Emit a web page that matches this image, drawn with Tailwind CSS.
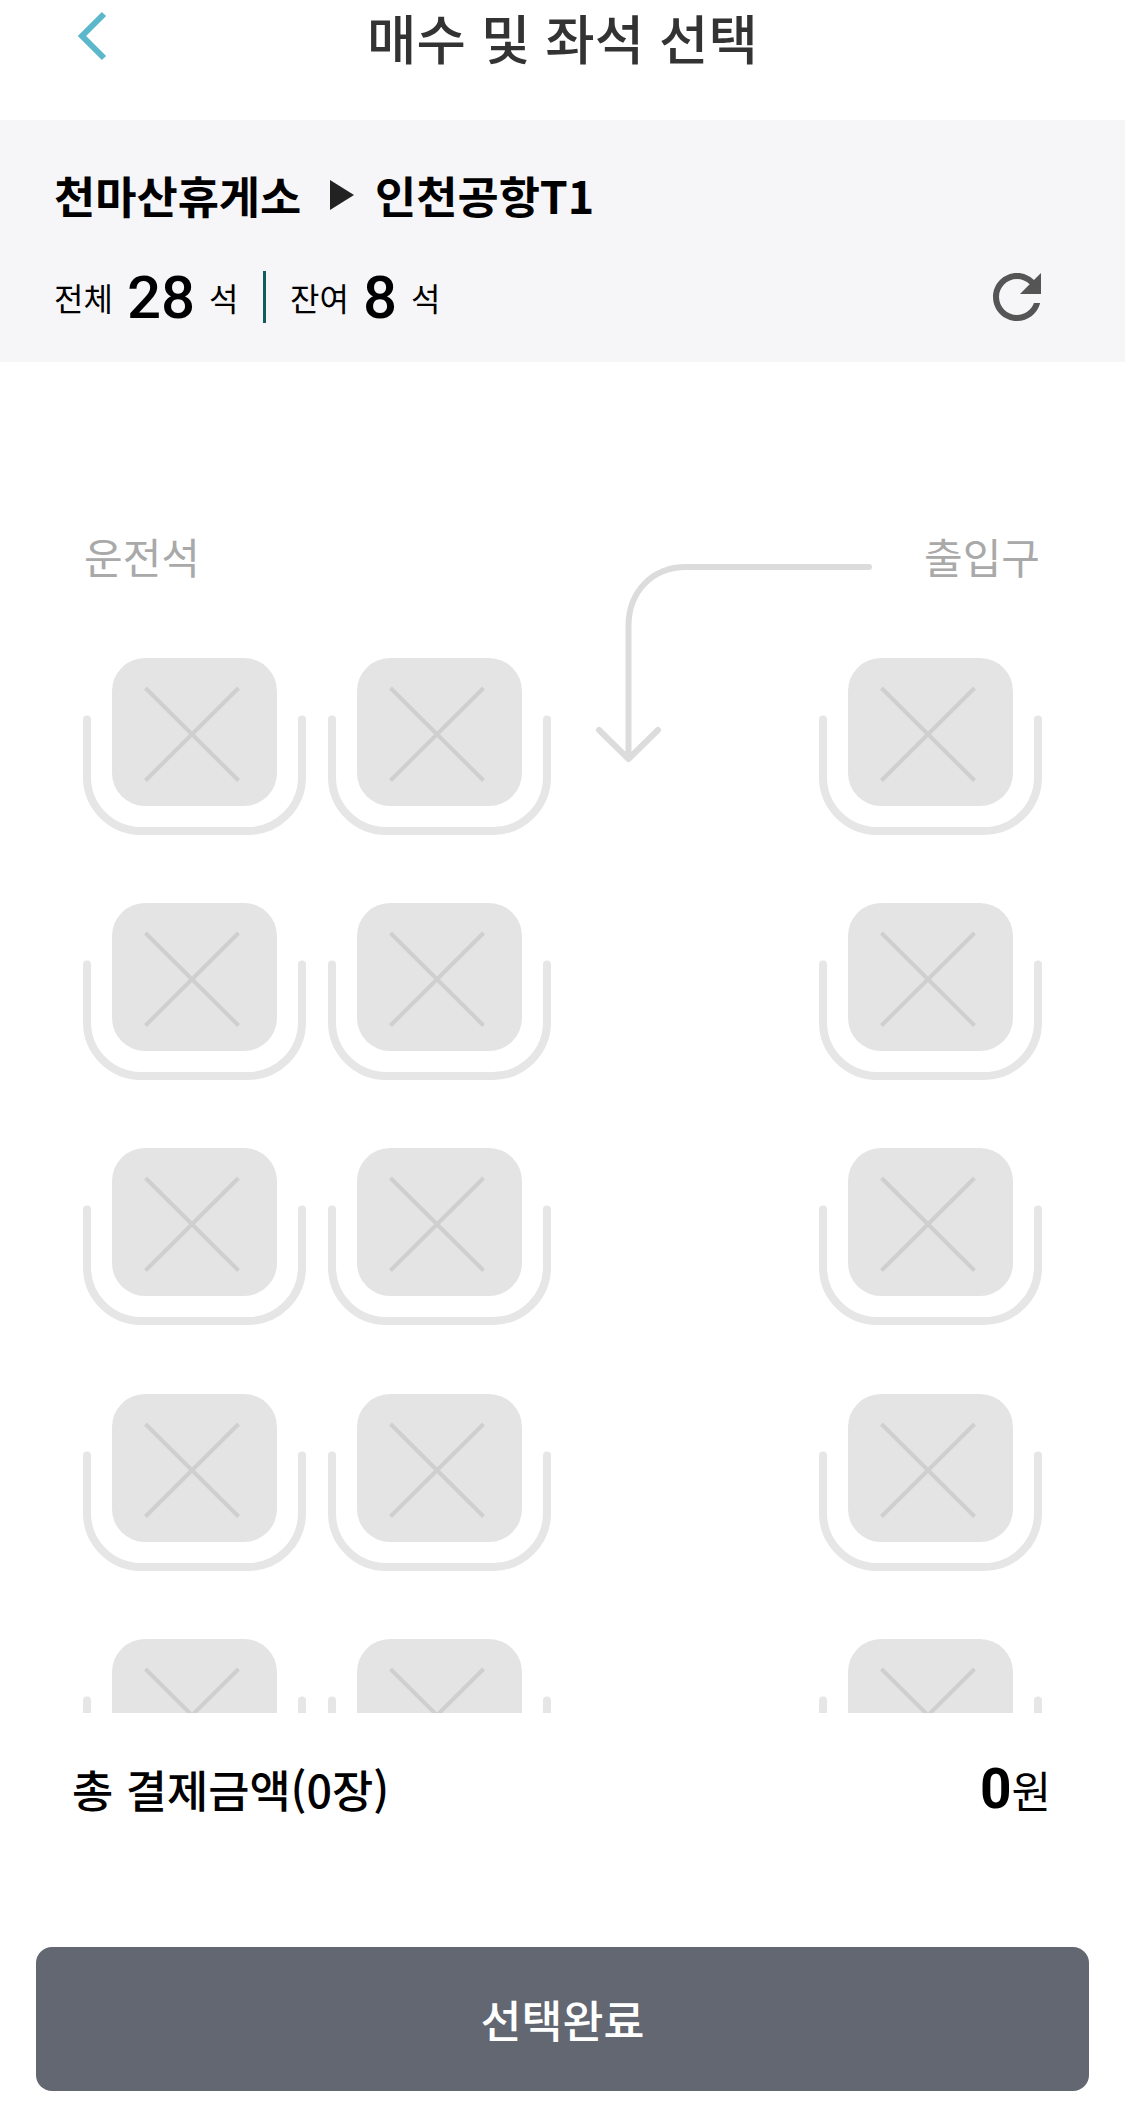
<!DOCTYPE html>
<html lang="ko">
<head>
    <meta charset="UTF-8">
    <title>매수 및 좌석 선택</title>
    <script src="https://cdn.jsdelivr.net/npm/@tailwindcss/browser@4"></script>
</head>
<body class="bg-white text-black h-[2103px] flex flex-col overflow-hidden font-['Noto_Sans_CJK_KR',sans-serif]">
    <!-- Seat shape, reused by every seat in the grid -->
    <svg class="hidden">
        <symbol id="seat" viewBox="0 0 223 178">
            <rect x="29" y="0" width="165" height="148" rx="33" fill="#e4e4e4"/>
            <path d="M62.5 30L155.5 122.5M155.5 30L62.5 122.5" stroke="#cfcfcf" stroke-width="4" fill="none"/>
            <path d="M4 61.5V119A54 54 0 0 0 58 173H165A54 54 0 0 0 219 119V61.5" stroke="#e6e6e6" stroke-width="8" stroke-linecap="round" fill="none"/>
        </symbol>
    </svg>

    <!-- Header -->
    <header class="h-[120px] shrink-0 grid grid-cols-[120px_1fr_120px]">
        <button type="button" class="pl-[77px] pt-[11px] flex items-start" aria-label="뒤로">
            <svg width="32" height="50" viewBox="0 0 32 50" fill="none" stroke="#5bb8cc" stroke-width="6"><path d="M27 3L5 25L27 47"/></svg>
        </button>
        <h1 class="text-center text-[53.7px] leading-[74px] font-medium text-[#333]">매수 및 좌석 선택</h1>
    </header>

    <!-- Route and seat count -->
    <section class="h-[242px] shrink-0 bg-[#f6f6f8] pl-[54px] pr-[72px]">
        <div class="flex items-center pt-[40px] h-[110px] text-[44.8px] leading-[70px] font-bold whitespace-nowrap">
            <span class="w-[276px]">천마산휴게소</span>
            <svg width="24" height="30" viewBox="0 0 24 30" fill="#222"><path d="M0 0L24 15L0 30z"/></svg>
            <span class="ml-[21px]">인천공항T1</span>
        </div>
        <div class="flex items-center justify-between h-[132px]">
            <div class="flex items-center h-[60px] mt-[2px] text-[32px] whitespace-nowrap">
                <span class="w-[73px]">전체</span>
                <strong class="w-[82px] pt-[2px] font-['Roboto',sans-serif] text-[60px] font-medium leading-[60px]">28</strong>
                <span class="w-[54px]">석</span>
                <span class="w-[3px] h-[52px] bg-[#155a60]"></span>
                <span class="ml-[24px] w-[73px]">잔여</span>
                <strong class="w-[48px] pt-[2px] font-['Roboto',sans-serif] text-[60px] font-medium leading-[60px]">8</strong>
                <span>석</span>
            </div>
            <button type="button" class="mt-[2px]" aria-label="새로고침">
                <svg width="72" height="72" viewBox="0 0 24 24" fill="#555"><path d="M17.65 6.35C16.2 4.9 14.21 4 12 4c-4.42 0-7.99 3.58-7.99 8s3.57 8 7.99 8c3.73 0 6.84-2.55 7.73-6h-2.08c-.82 2.33-3.04 4-5.65 4-3.31 0-6-2.69-6-6s2.69-6 6-6c1.66 0 3.14.69 4.22 1.78L13 11h7V4l-2.35 2.35z"/></svg>
            </button>
        </div>
    </section>

    <!-- Seat map, the last row is cut off by the scroll area -->
    <main class="relative h-[1351px] shrink-0 overflow-hidden px-[83px] pt-[159px]">
        <div class="flex justify-between h-[137px] pl-px pr-[2px] text-[42px] leading-[70px] text-[#a9a9a9]">
            <span>운전석</span>
            <span>출입구</span>
        </div>
        <svg class="absolute left-[590px] top-[196px]" width="290" height="212" viewBox="0 0 290 212" fill="none" stroke="#dcdcdc" stroke-width="6" stroke-linecap="round" stroke-linejoin="round">
            <path d="M279 9H96C62 9 38.5 34 38.5 68V201M9 172L38.5 201L68 172"/>
        </svg>
        <div id="seats" class="grid grid-cols-[repeat(4,223px)] gap-x-[22.3px] gap-y-[67.2px]"></div>
    </main>

    <!-- Total -->
    <section class="h-[234px] shrink-0 flex items-start justify-between pl-[72px] pr-[74px] pt-[38px]">
        <span class="text-[44.8px] leading-[76px] font-medium">총 결제금액(0장)</span>
        <span class="flex items-baseline text-[43px] leading-[76px]"><strong class="font-['Roboto',sans-serif] text-[55px] leading-[74px] font-bold">0</strong>원</span>
    </section>

    <button type="button" class="mx-[36px] h-[144px] shrink-0 rounded-[16px] bg-[#636771] text-white text-[44.5px] leading-[76px] pb-px font-medium">선택완료</button>

    <script>
      const rows = 5;
      // 1 = seat, 0 = aisle
      const layout = [1, 1, 0, 1];
      const seats = document.getElementById('seats');
      for (let i = 0; i < rows; i++) {
        layout.forEach(function(cell) {
          const div = document.createElement('div');
          div.className = 'h-[178px]';
          if (cell) {
            div.innerHTML = '<svg width="223" height="178"><use href="#seat"/></svg>';
          }
          seats.appendChild(div);
        });
      }
    </script>
</body>
</html>
